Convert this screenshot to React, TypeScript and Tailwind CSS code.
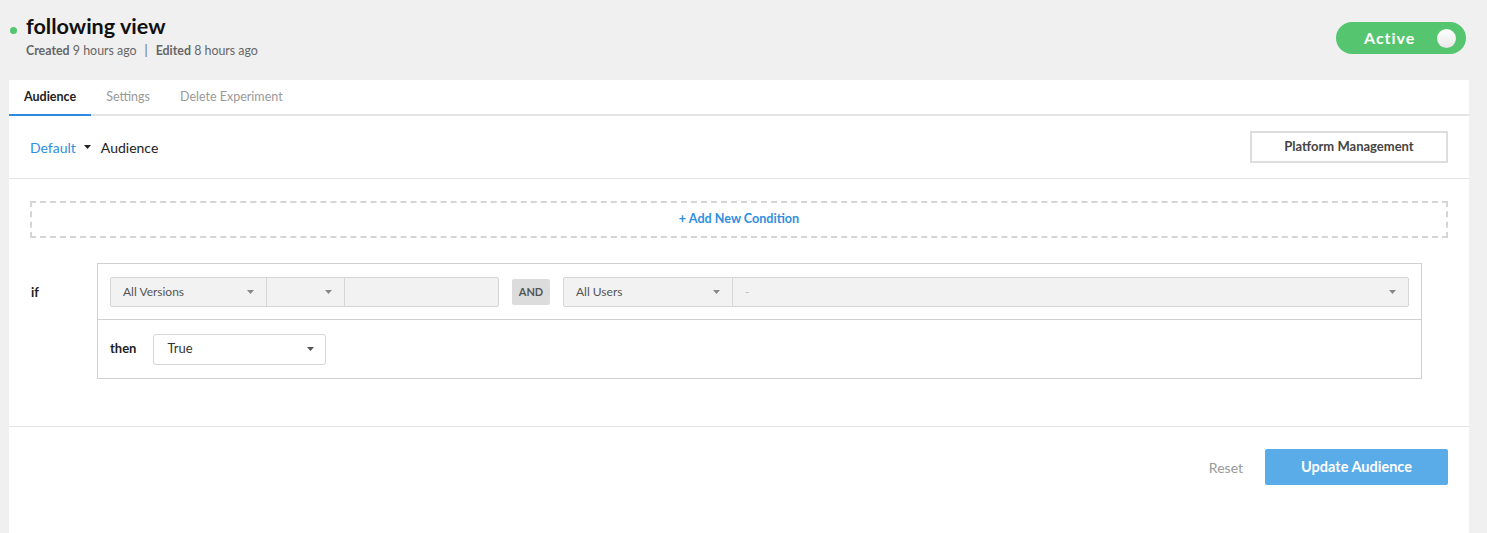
import { useState } from 'react';

const tabs = ['Audience', 'Settings', 'Delete Experiment'];

function Caret({ className = '' }: { className?: string }) {
  return (
    <svg width="7" height="4" viewBox="0 0 7 4" className={className}>
      <path d="M0 0 L7 0 L3.5 4 Z" fill="currentColor" />
    </svg>
  );
}

function Select({ label, className = '', textClass = 'text-[#555]' }: { label: string; className?: string; textClass?: string }) {
  return (
    <div className={`flex items-center justify-between h-full px-[12px] ${className}`}>
      <span className={`text-[12px] ${textClass}`}>{label}</span>
      <Caret className="text-[#888]" />
    </div>
  );
}

export default function App() {
  const [active, setActive] = useState(true);
  const [tab, setTab] = useState('Audience');

  return (
    <div className="min-h-[533px] bg-[#f0f0f0] text-[#222]" style={{ fontFamily: 'Lato, "Open Sans", sans-serif' }}>
      {/* header */}
      <div className="flex justify-between items-start h-[80px] pl-[10px] pr-[21px]">
        <div className="pt-[13px]">
          <div className="flex items-center gap-[9px]">
            <span className="w-[7px] h-[7px] rounded-full bg-[#55c56f] mt-[8px]" />
            <h1 className="text-[21.6px] leading-[26px] font-bold text-[#111]">following view</h1>
          </div>
          <div className="pl-[16px] mt-[4px] text-[12.4px] leading-[16px] text-[#666]">
            <span className="font-bold">Created</span> 9 hours ago
            <span className="mx-[8px]">|</span>
            <span className="font-bold">Edited</span> 8 hours ago
          </div>
        </div>
        <button
          onClick={() => setActive(!active)}
          className="mt-[22px] w-[130px] h-[32px] rounded-full bg-[#55c56f] flex items-center justify-between pl-[28px] pr-[10px]"
        >
          <span className="text-white text-[16px] font-bold tracking-[1px]">Active</span>
          <span className="w-[19px] h-[19px] rounded-full bg-gradient-to-b from-white to-[#e8e8e8]" />
        </button>
      </div>

      {/* card */}
      <div className="ml-[9px] mr-[18px] bg-white min-h-[453px]">
        <div className="flex border-b-2 border-[#e3e3e3]">
          {tabs.map((t) => (
            <button
              key={t}
              onClick={() => setTab(t)}
              className={`h-[36px] px-[15px] text-[12.5px] -mb-[2px] border-b-2 ${
                tab === t ? 'font-bold text-[#222] border-[#2d8ae0]' : 'text-[#999] border-transparent'
              }`}
            >
              {t}
            </button>
          ))}
        </div>

        <div className="flex items-center justify-between px-[21px] py-[15px] border-b border-[#e3e3e3]">
          <div className="flex items-center text-[14px]">
            <span className="text-[#2f8fe0]">Default</span>
            <Caret className="text-[#222] mx-[8px]" />
            <span className="ml-[2px] text-[#222]">Audience</span>
          </div>
          <button className="w-[198px] h-[32px] border-2 border-[#ddd] text-[13px] font-bold text-[#444]">
            Platform Management
          </button>
        </div>

        <div className="px-[21px] pt-[22px]">
          <div className="h-[37px] border-2 border-dashed border-[#d5d5d5] flex items-center justify-center text-[12.6px] font-bold text-[#2f8fe0]">
            + Add New Condition
          </div>

          <div className="flex mt-[25px] mr-[26px]">
            <div className="w-[67px] pt-[20px] pl-[1px] text-[13px] font-bold">if</div>
            <div className="flex-1 border border-[#d0d0d0]">
              <div className="flex items-center px-[12px] pt-[13px] pb-[12px] border-b border-[#d0d0d0]">
                <div className="flex h-[30px] border border-[#d6d6d6] rounded-[2px] bg-[#f2f2f2]">
                  <Select label="All Versions" className="w-[156px] border-r border-[#d6d6d6]" />
                  <Select label="" className="w-[78px] border-r border-[#d6d6d6]" />
                  <div className="w-[153px]" />
                </div>
                <div className="mx-[13px] h-[26px] w-[38px] flex items-center justify-center rounded-[2px] bg-[#dcdcdc] text-[11px] font-bold text-[#555]">
                  AND
                </div>
                <div className="flex flex-1 h-[30px] border border-[#d6d6d6] rounded-[2px] bg-[#f2f2f2]">
                  <Select label="All Users" className="w-[169px] border-r border-[#d6d6d6]" />
                  <Select label="-" className="flex-1" textClass="text-[#bbb]" />
                </div>
              </div>
              <div className="flex items-center h-[58px] px-[12px]">
                <span className="text-[13px] font-bold mr-[17px]">then</span>
                <div className="w-[173px] h-[31px] border border-[#d6d6d6] rounded-[3px] bg-white flex items-center justify-between pl-[13px] pr-[11px]">
                  <span className="text-[13px] text-[#333]">True</span>
                  <Caret className="text-[#555]" />
                </div>
              </div>
            </div>
          </div>
        </div>

        <div className="mt-[47px] border-t border-[#e3e3e3] flex items-center justify-end gap-[22px] px-[21px] pt-[22px]">
          <button className="text-[14px] text-[#999]">Reset</button>
          <button className="w-[183px] h-[36px] rounded-[2px] bg-[#5aace9] text-white text-[14.5px] font-bold">
            Update Audience
          </button>
        </div>
      </div>
    </div>
  );
}
